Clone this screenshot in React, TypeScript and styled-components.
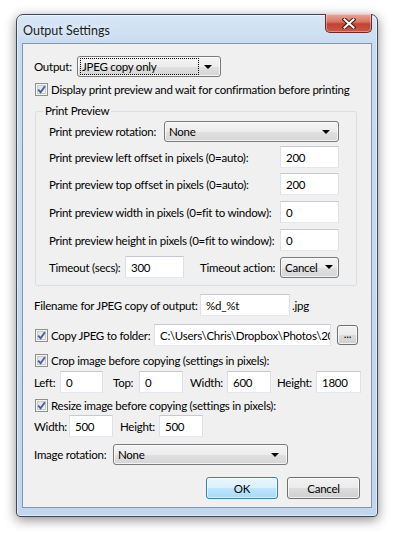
import React from 'react';
import styled, { createGlobalStyle } from 'styled-components';

const GlobalStyle = createGlobalStyle`
  html, body {
    margin: 0;
    padding: 0;
    background: #ffffff;
  }
  body {
    font-family: Lato, "Open Sans", sans-serif;
    font-size: 11.5px;
    letter-spacing: -0.25px;
    color: #000;
  }
`;

const Page = styled.div`
  width: 398px;
  height: 534px;
  box-sizing: border-box;
  padding: 14px 0 0 16px;
  overflow: hidden;
`;

const Window = styled.div`
  width: 362px;
  height: 503px;
  box-sizing: border-box;
  border: 1px solid #3a4756;
  border-radius: 7px 7px 4px 4px;
  background: linear-gradient(180deg, #d9e7f6 0%, #c8dbf1 30px, #c2d6ee 100%);
  box-shadow: 0 3px 12px rgba(0, 0, 0, 0.45), inset 0 0 0 1px rgba(255, 255, 255, 0.55);
  display: flex;
  flex-direction: column;
  padding: 0 5px 8px;
`;

const TitleBar = styled.div`
  height: 28px;
  display: flex;
  align-items: flex-start;
  flex-shrink: 0;
`;

const TitleText = styled.div`
  padding: 8px 0 0 1px;
  line-height: 15px;
  font-size: 12.5px;
  letter-spacing: 0;
  color: #1a1a1a;
  text-shadow: 0 0 6px rgba(255, 255, 255, 0.9);
`;

const CloseButton = styled.div`
  margin-left: auto;
  margin-top: -1px;
  width: 47px;
  height: 19px;
  box-sizing: border-box;
  border: 1px solid #6b2a22;
  border-top: none;
  border-radius: 0 0 5px 5px;
  background: linear-gradient(180deg, #e9a99b 0%, #d9705f 45%, #c4412f 55%, #c85a45 100%);
  box-shadow: inset 0 0 0 1px rgba(255, 255, 255, 0.35);
  display: flex;
  align-items: center;
  justify-content: center;
`;

const Client = styled.div`
  flex: 1;
  border: 1px solid #8396b0;
  background: #f0f0f0;
  padding: 0 0 0 11px;
  display: flex;
  flex-direction: column;
`;

const Row = styled.div<{ $mt: number; $h: number }>`
  display: flex;
  align-items: center;
  margin-top: ${(p) => p.$mt}px;
  height: ${(p) => p.$h}px;
  flex-shrink: 0;
`;

const Label = styled.span<{ $w?: number; $ml?: number }>`
  display: inline-block;
  width: ${(p) => (p.$w ? `${p.$w}px` : 'auto')};
  margin-left: ${(p) => p.$ml ?? 0}px;
  white-space: nowrap;
  flex-shrink: 0;
`;

const TextBox = styled.div<{ $w: number; $ml?: number }>`
  width: ${(p) => p.$w}px;
  height: 22px;
  margin-left: ${(p) => p.$ml ?? 0}px;
  box-sizing: border-box;
  background: #ffffff;
  border: 1px solid;
  border-color: #c6c9d0 #dde1e7 #e3e9ef #dde1e7;
  padding-left: 5px;
  display: flex;
  align-items: center;
  white-space: nowrap;
  overflow: hidden;
  flex-shrink: 0;
`;

const Combo = styled.div<{ $w: number }>`
  width: ${(p) => p.$w}px;
  height: 21px;
  box-sizing: border-box;
  border: 1px solid #7a7a7a;
  border-radius: 3px;
  background: linear-gradient(180deg, #f4f4f4 0%, #ececec 50%, #e0e0e0 51%, #d6d6d6 100%);
  box-shadow: inset 0 0 0 1px rgba(255, 255, 255, 0.7);
  display: flex;
  align-items: center;
  padding: 0 8px 0 3px;
  flex-shrink: 0;
`;

const ComboText = styled.span<{ $focus?: boolean }>`
  flex: 1;
  padding: 0 1px;
  line-height: 15px;
  outline: ${(p) => (p.$focus ? '1px dotted #000' : 'none')};
  outline-offset: 0;
  white-space: nowrap;
`;

const Arrow = styled.span`
  width: 0;
  height: 0;
  border-left: 4px solid transparent;
  border-right: 4px solid transparent;
  border-top: 4px solid #000;
  margin-left: 6px;
`;

const CheckBox = styled.span`
  width: 13px;
  height: 13px;
  margin-left: 1px;
  box-sizing: border-box;
  border: 1px solid #8e8f8f;
  background: linear-gradient(135deg, #dcdcdc 0%, #f8f8f8 100%);
  box-shadow: inset 0 0 0 1px #f4f4f4, inset 0 0 0 2px #c6cbd2;
  display: flex;
  align-items: center;
  justify-content: center;
  flex-shrink: 0;
`;

const CheckLabel = styled.span`
  margin-left: 3px;
  white-space: nowrap;
`;

const Group = styled.fieldset`
  margin: 6px 0 0 1px;
  width: 322px;
  box-sizing: border-box;
  border: 1px solid #d5dfe5;
  border-radius: 3px;
  padding: 0 17px 7px 13px;
  min-width: 0;
`;

const Legend = styled.legend`
  margin-left: -6px;
  padding: 0 2px;
  line-height: 16px;
`;

const SmallButton = styled.div`
  width: 21px;
  height: 20px;
  margin-left: 6px;
  box-sizing: border-box;
  border: 1px solid #707070;
  border-radius: 3px;
  background: linear-gradient(180deg, #f2f2f2 0%, #ebebeb 50%, #dddddd 51%, #cfcfcf 100%);
  box-shadow: inset 0 0 0 1px rgba(255, 255, 255, 0.7);
  display: flex;
  align-items: center;
  justify-content: center;
  line-height: 10px;
  padding-bottom: 2px;
  flex-shrink: 0;
`;

const ButtonRow = styled(Row)`
  justify-content: flex-end;
  padding-right: 11px;
`;

const PushButton = styled.div<{ $w: number; $default?: boolean }>`
  width: ${(p) => p.$w}px;
  height: 22px;
  margin-left: 9px;
  box-sizing: border-box;
  border: 1px solid ${(p) => (p.$default ? '#3c7fb1' : '#707070')};
  border-radius: 3px;
  background: ${(p) =>
    p.$default
      ? 'linear-gradient(180deg, #eaf6fd 0%, #d9f0fc 50%, #bee6fd 51%, #a7d9f5 100%)'
      : 'linear-gradient(180deg, #f2f2f2 0%, #ebebeb 50%, #dddddd 51%, #cfcfcf 100%)'};
  box-shadow: inset 0 0 0 1px ${(p) => (p.$default ? 'rgba(255,255,255,0.6)' : 'rgba(255,255,255,0.7)')};
  display: flex;
  align-items: center;
  justify-content: center;
`;

const Check = () => (
  <CheckBox>
    <svg width="9" height="9" viewBox="0 0 9 9">
      <path d="M1.2 4.6 L3.6 7.2 L7.9 1.2" fill="none" stroke="#4a5f97" strokeWidth="1.9" />
    </svg>
  </CheckBox>
);

const Select = ({ w, value, focus }: { w: number; value: string; focus?: boolean }) => (
  <Combo $w={w}>
    <ComboText $focus={focus}>{value}</ComboText>
    <Arrow />
  </Combo>
);

const previewRows = [
  { label: 'Print preview left offset in pixels (0=auto):', value: '200', mt: 4 },
  { label: 'Print preview top offset in pixels (0=auto):', value: '200', mt: 5 },
  { label: 'Print preview width in pixels (0=fit to window):', value: '0', mt: 6 },
  { label: 'Print preview height in pixels (0=fit to window):', value: '0', mt: 6 },
];

export default function App() {
  return (
    <>
      <GlobalStyle />
      <Page>
        <Window>
          <TitleBar>
            <TitleText>Output Settings</TitleText>
            <CloseButton>
              <svg width="14" height="11" viewBox="0 0 14 11">
                <path d="M2.5 1.5 L11.5 9.5 M11.5 1.5 L2.5 9.5" stroke="#4a1a14" strokeWidth="4" strokeLinecap="square" />
                <path d="M2.5 1.5 L11.5 9.5 M11.5 1.5 L2.5 9.5" stroke="#ffffff" strokeWidth="2" strokeLinecap="square" />
              </svg>
            </CloseButton>
          </TitleBar>
          <Client>
            <Row $mt={12} $h={21}>
              <Label $w={43}>Output:</Label>
              <Select w={144} value="JPEG copy only" focus />
            </Row>
            <Row $mt={4} $h={16}>
              <Check />
              <CheckLabel>Display print preview and wait for confirmation before printing</CheckLabel>
            </Row>
            <Group>
              <Legend>Print Preview</Legend>
              <Row $mt={2} $h={21}>
                <Label $w={115}>Print preview rotation:</Label>
                <Select w={175} value="None" />
              </Row>
              {previewRows.map((r) => (
                <Row key={r.label} $mt={r.mt} $h={22}>
                  <Label $w={231}>{r.label}</Label>
                  <TextBox $w={59}>{r.value}</TextBox>
                </Row>
              ))}
              <Row $mt={5} $h={22}>
                <Label $w={76}>Timeout (secs):</Label>
                <TextBox $w={59}>300</TextBox>
                <Label $w={80} $ml={16}>Timeout action:</Label>
                <Select w={59} value="Cancel" />
              </Row>
            </Group>
            <Row $mt={8} $h={22}>
              <Label $w={166}>Filename for JPEG copy of output:</Label>
              <TextBox $w={90}>%d_%t</TextBox>
              <Label $ml={2}>.jpg</Label>
            </Row>
            <Row $mt={8} $h={22}>
              <Check />
              <Label $w={103} $ml={3}>Copy JPEG to folder:</Label>
              <TextBox $w={177}>C:\Users\Chris\Dropbox\Photos\2013</TextBox>
              <SmallButton>...</SmallButton>
            </Row>
            <Row $mt={6} $h={16}>
              <Check />
              <CheckLabel>Crop image before copying (settings in pixels):</CheckLabel>
            </Row>
            <Row $mt={3} $h={22}>
              <Label $w={26}>Left:</Label>
              <TextBox $w={43}>0</TextBox>
              <Label $w={26} $ml={10}>Top:</Label>
              <TextBox $w={44}>0</TextBox>
              <Label $w={37} $ml={7}>Width:</Label>
              <TextBox $w={44}>600</TextBox>
              <Label $w={39} $ml={6}>Height:</Label>
              <TextBox $w={45}>1800</TextBox>
            </Row>
            <Row $mt={4} $h={16}>
              <Check />
              <CheckLabel>Resize image before copying (settings in pixels):</CheckLabel>
            </Row>
            <Row $mt={2} $h={22}>
              <Label $w={35}>Width:</Label>
              <TextBox $w={44}>500</TextBox>
              <Label $w={39} $ml={7}>Height:</Label>
              <TextBox $w={44}>500</TextBox>
            </Row>
            <Row $mt={7} $h={21}>
              <Label $w={79}>Image rotation:</Label>
              <Select w={175} value="None" />
            </Row>
            <ButtonRow $mt={12} $h={22}>
              <PushButton $w={72} $default>OK</PushButton>
              <PushButton $w={73}>Cancel</PushButton>
            </ButtonRow>
          </Client>
        </Window>
      </Page>
    </>
  );
}
